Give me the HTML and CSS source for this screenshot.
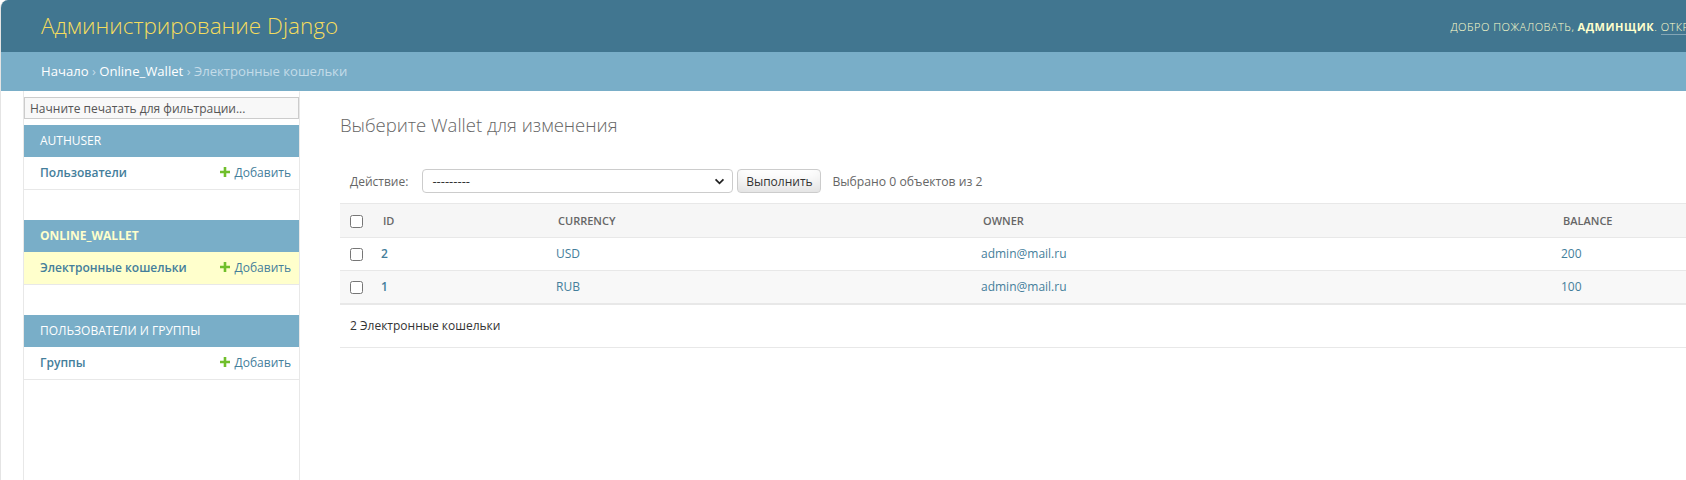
FILE: index.html
```html
<!DOCTYPE html>
<html lang="ru">
<head>
<meta charset="utf-8">
<title>Выберите Wallet для изменения | Администрирование Django</title>
<link rel="stylesheet" href="styles.css">
</head>
<body>
<div class="page">
  <header class="header">
    <h1 class="site-name"><a href="#">Администрирование Django</a></h1>
    <div class="user-tools">Добро пожаловать, <strong>админщик</strong>. <a href="#">Открыть сайт</a> / <a href="#">Изменить пароль</a> / <a href="#">Выйти</a></div>
  </header>
  <nav class="breadcrumbs"><a href="#">Начало</a> › <a href="#">Online_Wallet</a> › Электронные кошельки</nav>
  <div class="main">
    <div class="toggle"></div>
    <aside class="sidebar">
      <input class="nav-filter" type="search" placeholder="Начните печатать для фильтрации...">
      <div class="module">
        <div class="caption">AUTHUSER</div>
        <div class="model-row">
          <a class="model" href="#">Пользователи</a>
          <a class="addlink" href="#"><svg class="plus" viewBox="0 0 10 10" width="10" height="10"><path d="M3.7 0h2.6v3.7H10v2.6H6.3V10H3.7V6.3H0V3.7h3.7z" fill="#70bf2b"/></svg>Добавить</a>
        </div>
      </div>
      <div class="module">
        <div class="caption current">ONLINE_WALLET</div>
        <div class="model-row current-model">
          <a class="model" href="#">Электронные кошельки</a>
          <a class="addlink" href="#"><svg class="plus" viewBox="0 0 10 10" width="10" height="10"><path d="M3.7 0h2.6v3.7H10v2.6H6.3V10H3.7V6.3H0V3.7h3.7z" fill="#70bf2b"/></svg>Добавить</a>
        </div>
      </div>
      <div class="module">
        <div class="caption">ПОЛЬЗОВАТЕЛИ И ГРУППЫ</div>
        <div class="model-row">
          <a class="model" href="#">Группы</a>
          <a class="addlink" href="#"><svg class="plus" viewBox="0 0 10 10" width="10" height="10"><path d="M3.7 0h2.6v3.7H10v2.6H6.3V10H3.7V6.3H0V3.7h3.7z" fill="#70bf2b"/></svg>Добавить</a>
        </div>
      </div>
    </aside>
    <main class="content">
      <h1 class="title">Выберите Wallet для изменения</h1>
      <div class="actions">
        <span class="action-label">Действие:</span>
        <div class="select">
          <span>---------</span>
          <svg class="chevron" viewBox="0 0 12 8" width="11" height="7"><path d="M1.5 1.5L6 6l4.5-4.5" fill="none" stroke="#222" stroke-width="2"/></svg>
        </div>
        <button class="button" type="button">Выполнить</button>
        <span class="action-counter">Выбрано 0 объектов из 2</span>
      </div>
      <table class="results">
        <colgroup>
          <col class="c-check"><col class="c-id"><col class="c-cur"><col class="c-owner"><col>
        </colgroup>
        <thead>
          <tr>
            <th class="check"><input type="checkbox"></th>
            <th><span>ID</span></th>
            <th><span>Currency</span></th>
            <th><span>Owner</span></th>
            <th><span>Balance</span></th>
          </tr>
        </thead>
        <tbody>
          <tr>
            <td class="check"><input type="checkbox"></td>
            <th class="field-id"><a href="#">2</a></th>
            <td><a href="#">USD</a></td>
            <td><a href="#">admin@mail.ru</a></td>
            <td class="num">200</td>
          </tr>
          <tr class="row2">
            <td class="check"><input type="checkbox"></td>
            <th class="field-id"><a href="#">1</a></th>
            <td><a href="#">RUB</a></td>
            <td><a href="#">admin@mail.ru</a></td>
            <td class="num">100</td>
          </tr>
        </tbody>
      </table>
      <p class="paginator">2 Электронные кошельки</p>
    </main>
  </div>
</div>
</body>
</html>
```
FILE: styles.css
```css
html, body {
  margin: 0;
  padding: 0;
  overflow: hidden;
  background: #fff;
}
body {
  font-family: "Open Sans", "Noto Sans", sans-serif;
  font-size: 13px;
  color: #333;
}
a { text-decoration: none; }

.page {
  width: 1958px;
  min-height: 480px;
  border-left: 1px solid #e4e4e4;
  border-top-left-radius: 8px;
  overflow: hidden;
  box-sizing: border-box;
}

.header {
  display: flex;
  justify-content: space-between;
  align-items: center;
  padding: 10px 40px;
  background: #417690;
  color: #ffc;
}
.site-name {
  margin: 0;
  font-size: 22.5px;
  line-height: 32px;
  font-weight: 300;
}
.site-name a { color: #f5dd5d; }
.user-tools {
  font-size: 11px;
  letter-spacing: 0.5px;
  text-transform: uppercase;
  font-weight: 300;
  white-space: nowrap;
  color: #ffc;
}
.user-tools strong { font-weight: 700; }
.user-tools a {
  color: #ffc;
  border-bottom: 1px solid rgba(255,255,255,0.35);
}

.breadcrumbs {
  background: #79aec8;
  padding: 10px 40px;
  font-size: 13.1px;
  line-height: 19px;
  color: #c4dce8;
}
.breadcrumbs a { color: #fff; }

.main {
  display: flex;
  min-height: 389px;
}
.toggle {
  flex: 0 0 23px;
  box-sizing: border-box;
  border-right: 1px solid #e8e8e8;
}
.sidebar {
  flex: 0 0 276px;
  box-sizing: border-box;
  border-right: 1px solid #e8e8e8;
  border-top: 1px solid transparent;
}
.nav-filter {
  display: block;
  width: 100%;
  box-sizing: border-box;
  margin: 5px 0 6px;
  padding: 2px 5px;
  height: 22px;
  border: 1px solid #ccc;
  background: #f8f8f8;
  font-family: inherit;
  font-size: 12px;
  color: #333;
  outline: none;
}
.nav-filter::placeholder { color: #555; }

.module { margin-bottom: 30px; }
.caption {
  background: #79aec8;
  color: #fff;
  font-size: 12px;
  line-height: 16px;
  padding: 8px 8px 8px 16px;
}
.caption.current { color: #ffc; font-weight: 700; }
.model-row {
  display: flex;
  justify-content: space-between;
  align-items: center;
  padding: 8px 8px 8px 16px;
  border-bottom: 1px solid #e8e8e8;
  font-size: 12px;
  line-height: 16px;
}
.current-model { background: #ffc; }
.model { color: #447e9b; font-weight: 600; }
.addlink {
  color: #447e9b;
  display: flex;
  align-items: center;
  gap: 5px;
  white-space: nowrap;
}
.plus { display: block; margin-top: -3px; }

.content {
  flex: 1;
  padding: 20px 40px;
}
.title {
  margin: 0 0 20px;
  font-size: 18.5px;
  line-height: 28px;
  font-weight: 300;
  color: #666;
}
.actions {
  display: flex;
  align-items: center;
  padding: 10px;
  height: 24px;
  color: #666;
}
.action-label { font-size: 12px; }
.select {
  margin-left: 14px;
  width: 311px;
  height: 24px;
  box-sizing: border-box;
  border: 1px solid #ccc;
  border-radius: 4px;
  display: flex;
  align-items: center;
  justify-content: space-between;
  padding: 0 7px 0 9px;
  font-size: 13px;
  color: #333;
  background: #fff;
}
.chevron { display: block; }
.button {
  margin-left: 4px;
  width: 84px;
  height: 24px;
  padding: 0 6px;
  font-family: inherit;
  font-size: 12px;
  color: #333;
  border: 1px solid #ccc;
  border-radius: 4px;
  background: #fff;
  box-shadow: 0 -15px 20px -10px rgba(0,0,0,0.15) inset;
}
.action-counter {
  margin-left: 11px;
  font-size: 12.2px;
  color: #666;
}

.results {
  width: 1580px;
  table-layout: fixed;
  border-collapse: collapse;
}
.c-check { width: 33px; }
.c-id { width: 175px; }
.c-cur { width: 425px; }
.c-owner { width: 580px; }
.results thead th {
  background: #f6f6f6;
  border-top: 1px solid #e8e8e8;
  border-bottom: 1px solid #e8e8e8;
  font-size: 11px;
  font-weight: 600;
  text-transform: uppercase;
  color: #666;
  text-align: left;
  padding: 0;
  height: 33px;
  vertical-align: middle;
}
.results thead th span {
  display: block;
  padding: 0 10px;
}
.results thead th.check,
.results td.check {
  text-align: center;
  padding: 0;
}
.results input[type="checkbox"] {
  margin: 0;
  width: 13px;
  height: 13px;
  vertical-align: middle;
}
.results tbody td,
.results tbody th {
  padding: 8px;
  font-size: 12px;
  line-height: 16px;
  border-bottom: 1px solid #e8e8e8;
  text-align: left;
  vertical-align: middle;
}
.results tbody a { color: #447e9b; }
.results tbody th a { font-weight: 600; }
.results .num { color: #447e9b; }
.results .row2 { background: #f8f8f8; }

.paginator {
  margin: 0;
  padding: 10px 10px;
  line-height: 22px;
  font-size: 12px;
  color: #333;
  border-top: 1px solid #e8e8e8;
  border-bottom: 1px solid #e8e8e8;
}
```
